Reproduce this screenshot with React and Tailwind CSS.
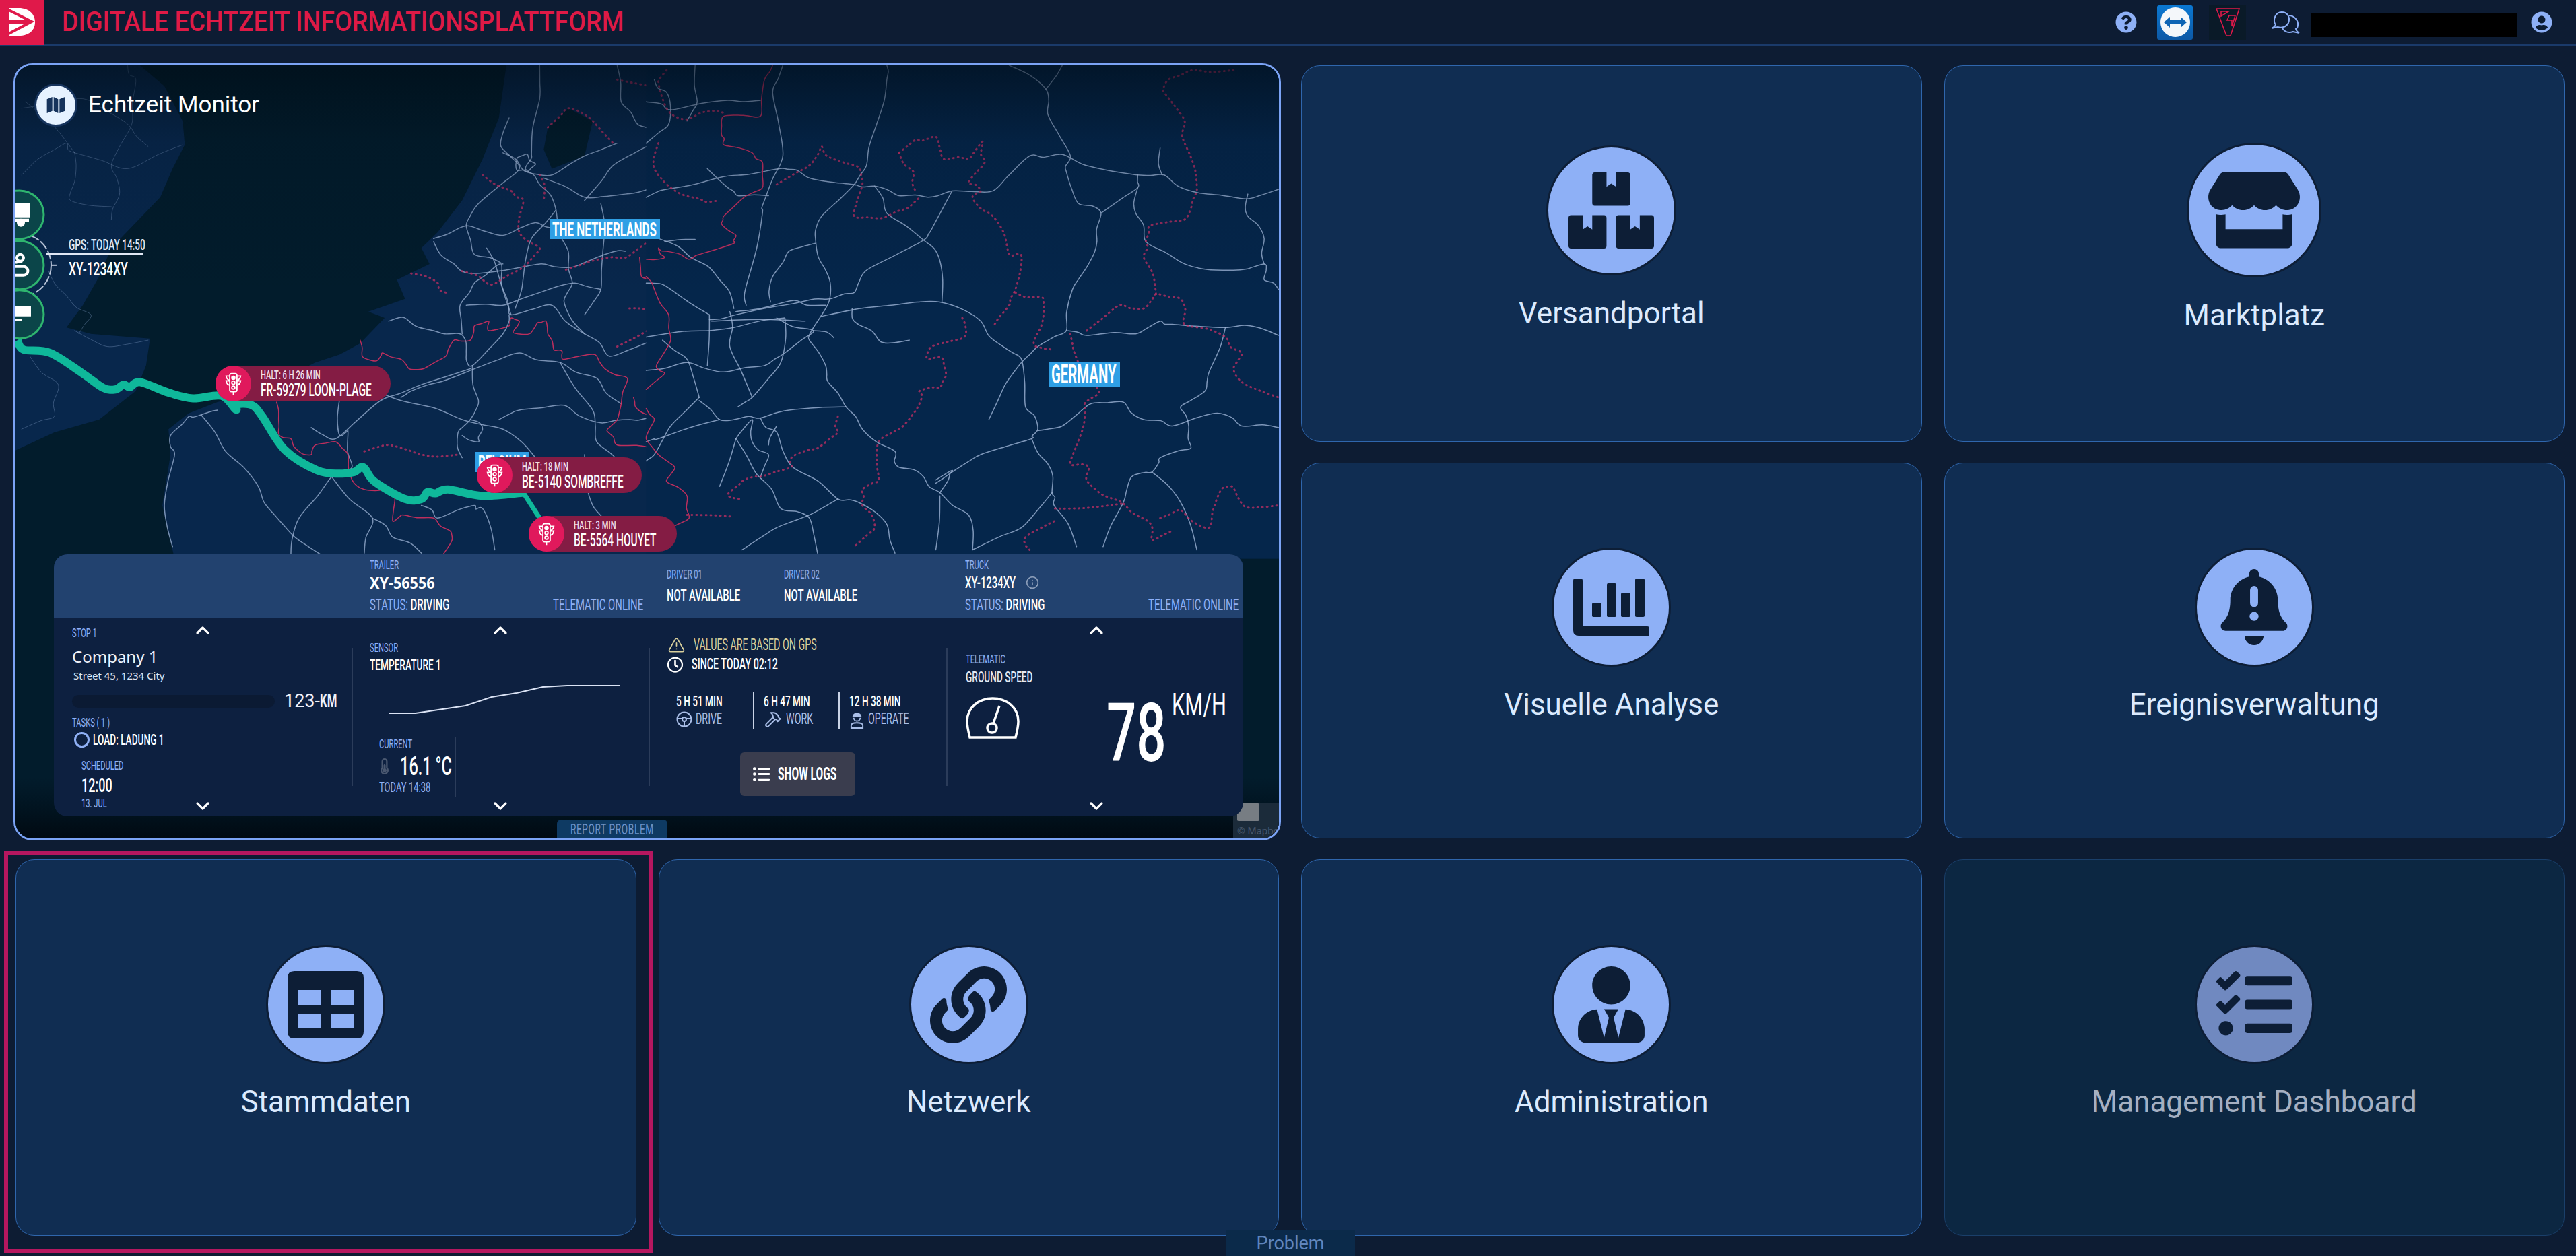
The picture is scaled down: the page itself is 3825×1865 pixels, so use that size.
import React from 'react';
import { FaBoxes, FaStore, FaLink, FaUserTie, FaTasks, FaQuestionCircle, FaUserCircle, FaThermometerHalf, FaRegClock, FaListUl } from 'react-icons/fa';
import { ChevronUp, ChevronDown, Info, TriangleAlert, Hammer } from 'lucide-react';

// traced from the map, left half and right half have their own coordinates
const roadsWest = [
  'M1290 15 L1290 120 L1270 290 L1255 340 L1290 390 L1330 470 L1360 600 L1370 700 L1350 760 L1400 860',
  'M1215 180 L1195 270 L1240 340 L1140 450 L1110 520 L1130 610 L1200 640',
  'M1235 305 L1260 295 L1280 325 L1260 350 L1235 345 L1235 305',
  'M1200 290 L1250 345 L1320 360 L1400 300 L1480 260',
  'M1030 560 L1110 520 L1200 550 L1280 510 L1330 530',
  'M1030 570 L1080 640 L1130 670 L1290 640 L1370 650 L1450 610 L1500 600',
  'M1110 770 L1200 770 L1290 730 L1375 700 L1440 720',
  'M1160 590 L1190 680 L1220 800',
  'M1300 370 L1400 430 L1500 420 L1568 400',
  'M1480 15 L1490 130 L1530 200 L1568 240',
  'M1400 440 L1470 330 L1568 260',
  'M1330 470 L1270 560 L1250 680 L1230 780',
  'M1440 450 L1445 600 L1440 720 L1400 800',
  'M1100 860 L1095 770 L1130 700 L1195 640 L1210 750 L1220 800 L1320 770 L1400 860 L1460 930 L1568 880',
  'M920 820 L960 810 L1030 850 L1095 860 L1110 920 L1125 960 L1200 860 L1215 800',
  'M1125 960 L1140 1070 L1120 1130 L1090 1170 L1100 1250',
  'M1120 1130 L1150 1160 L1140 1200 L1100 1180',
  'M730 1155 L790 1190 L900 1070 L1000 1020 L1120 970',
  'M830 1000 L950 1070 L1100 1130 L1200 1160 L1280 1250',
  'M950 1060 L975 1040 L1050 1010 L1130 970 L1240 920 L1340 950 L1430 1000 L1490 1080',
  'M1190 1130 L1240 1100 L1350 1085 L1440 1140 L1510 1130 L1568 1120',
  'M1340 950 L1420 1100 L1430 1200 L1500 1300',
  'M390 1530 L370 1400 L395 1240 L385 1180 L430 1120 L460 1115 L500 1100',
  'M460 1115 L520 1230 L600 1340 L640 1430 L690 1500 L760 1560',
  'M800 1060 L800 1180 L820 1170 L830 1280 L780 1310 L700 1440 L680 1560',
  'M1000 1400 L1040 1440 L1130 1400 L1150 1410 L1180 1540',
  'M1400 1240 L1420 1400 L1480 1500',
  'M880 1440 L930 1500 L1000 1550',
  'M780 1310 L880 1440 L860 1550',
];
const roadsEngland = [
  'M280 15 L300 60 L290 200 L240 330 L260 420 L240 500',
  'M150 290 L130 260 L60 310 L20 360',
  'M150 290 L280 340 L415 265',
  'M150 290 L150 380 L140 440 L240 460',
  'M30 130 L150 290',
  'M20 150 L170 120 L280 200 L330 270',
  'M85 660 L130 740 L190 800 L160 860',
  'M40 930 L110 1020 L100 1120 L20 1160',
  'M150 850 L230 900 L330 880',
];
const roadsEast = [
  'M590 15 L590 60 L565 200 L540 330 L510 390 L430 490 L415 560 L440 660 L450 750 L410 840 L400 880 L440 960 L445 1010 L490 1090 L530 1160 L610 1230 L620 1280 L680 1310 L720 1360 L790 1430 L800 1540',
  'M890 15 L980 90 L985 170 L1040 300 L1030 350 L1060 450 L1115 480 L1105 570 L1080 650 L1045 720 L1030 850 L960 900 L920 950 L880 1020 L840 1130',
  'M1020 15 L980 90',
  'M0 430 L50 405 L190 365 L325 340 L370 345 L440 380 L510 390 L560 395 L620 425 L690 430 L750 410 L850 410 L940 300 L1020 295 L1130 345 L1205 360 L1270 360 L1350 415 L1470 435 L1550 405',
  'M560 395 L590 480 L680 565 L720 630 L725 760',
  'M750 410 L700 530 L680 565 L540 660 L510 730 L450 750 L360 765 L220 800 L155 815',
  'M430 805 L600 770 L720 760 L820 820 L875 900 L920 940 L930 1090 L960 1160 L945 1190 L820 1240 L750 1295 L710 1330',
  'M1030 850 L1080 865 L1200 860 L1260 820 L1290 830 L1420 840 L1500 840 L1550 865',
  'M960 1165 L1020 1150 L1090 1080 L1170 1075 L1220 1130 L1290 1150 L1400 1110 L1460 1150 L1550 1155',
  'M1420 840 L1380 980 L1370 1040 L1310 1090 L1330 1150 L1335 1220 L1260 1250 L1240 1295 L1190 1310 L1170 1390 L1120 1530',
  'M1240 1295 L1310 1390 L1350 1540',
  'M945 1190 L985 1270 L995 1360 L1000 1400 L1055 1530',
  'M995 1360 L920 1470 L800 1540',
  'M1115 480 L1205 400 L1205 360',
  'M1205 400 L1200 480 L1225 570 L1320 640 L1440 660 L1515 640 L1515 690 L1550 720',
  'M1475 420 L1475 490 L1515 560 L1515 640',
  'M1260 275 L1265 360',
  'M245 770 L245 710 L285 480 L290 440 L335 300 L310 100 L335 15',
  'M305 760 L310 680 L350 600 L415 575',
  'M0 870 L155 850 L215 840 L340 810',
  'M155 800 L150 960',
  'M205 790 L205 900 L260 1060',
  'M160 820 L390 820',
  'M220 790 L360 755 L440 770',
  'M320 810 L410 850 L340 920 L290 960 L190 980 L100 950 L0 975',
  'M410 850 L460 872',
  'M505 780 L520 830 L575 885 L645 880',
  'M130 1070 L180 1130 L250 1120 L280 1125 L350 1100 L490 1090',
  'M280 1125 L320 1170 L360 1280 L470 1380 L520 1390 L590 1460 L610 1550',
  'M180 1130 L30 1190 L0 1200',
  'M130 1060 L60 1150 L20 1240 L0 1260',
  'M220 1190 L180 1340',
  'M220 1190 L260 1130 L260 1200 L300 1240 L280 1310',
  'M300 1210 L320 1150',
  'M220 1190 L270 1300 L330 1410 L400 1440 L420 1550',
  'M470 1380 L400 1430 L320 1470 L235 1540',
  'M225 1090 L260 1060 L330 950 L340 810',
  'M130 1060 L100 940 L40 880',
  'M720 1360 L745 1300 L750 1290 L710 1320',
  'M720 1370 L710 1540',
  'M0 700 L60 720 L155 800',
  'M30 560 L110 620 L180 690 L215 780',
  'M45 570 L120 563',
  'M0 130 L60 155 L200 125 L280 125',
  'M120 15 L125 130 L100 190',
  'M0 260 L55 200 L50 100 L20 60',
  'M150 340 L200 400 L225 425 L300 425',
];
const bordersWest = [
  'M850 880 L855 930 L890 945 L905 920 L950 940 L970 970 L1005 970 L1060 930 L1080 880 L1120 880 L1130 835 L1165 820 L1165 850 L1215 835 L1220 810 L1240 820 L1225 855 L1265 860 L1285 825 L1305 820 L1310 860 L1325 910 L1345 915 L1350 940 L1425 925 L1450 970 L1505 1000 L1490 1080 L1480 1130 L1455 1165 L1480 1210 L1568 1220',
  'M645 1075 L650 1130 L650 1175 L680 1190 L700 1230 L730 1240 L740 1210 L790 1200 L820 1240 L830 1320 L860 1350 L920 1350 L935 1380 L930 1450 L955 1430 L1030 1440 L1070 1480 L1075 1510 L1050 1560',
  'M1520 1060 L1525 1090 L1568 1120',
  'M1535 620 L1540 680 L1568 700',
];
const bordersEast = [
  'M310 15 L290 60 L280 175 L190 175 L185 235 L190 265 L260 290 L285 320 L285 400 L240 430 L190 490 L185 515 L220 550 L215 575 L130 610 L105 625 L50 600 L30 590 L45 620 L0 625',
  'M0 680 L20 720 L55 800 L60 880 L25 960 L45 985 L0 1035',
  'M0 1095 L20 1130 L0 1190 L30 1240 L70 1280 L50 1325 L100 1370 L105 1440 L60 1470',
];
const dotsWest = [
  'M975 670 L1040 700 L1060 730',
  'M1150 360 L1220 410 L1250 440 L1240 540 L1290 590 L1250 650 L1170 705 L1090 660',
  'M1310 210 L1360 150 L1420 190 L1470 260',
  'M1480 60 L1560 80',
  'M1290 360 L1300 440',
  'M1568 560 L1500 620 L1420 630 L1350 660',
  'M860 1230 L920 1210 L1000 1240 L1090 1240',
  'M1480 900 L1568 840',
  'M1510 780 L1560 790',
];
const dotsEast = [
  'M50 30 L30 70 L50 150 L100 185 L150 160 L195 170',
  'M30 260 L20 340 L60 400 L130 435 L180 440',
  'M320 390 L400 330 L430 270 L460 310 L520 335 L530 390 L510 490 L580 495 L640 465 L670 430',
  'M620 290 L660 250 L710 240 L730 310 L790 310 L825 255 L830 320 L790 385 L820 410 L800 430 L850 490 L890 610 L920 615 L905 720 L890 770 L850 840',
  'M905 730 L970 745 L975 790 L950 890 L1000 910',
  'M620 290 L655 350 L660 410',
  'M775 810 L780 870 L700 900 L690 940 L725 935 L735 990 L720 1030 L670 1040 L670 1080 L630 1150 L570 1200 L570 1320 L530 1350 L530 1400 L560 1470 L510 1530',
  'M470 1120 L470 1170 L420 1220 L360 1245 L355 1280 L280 1310 L240 1320 L200 1365 L230 1380',
  'M100 1430 L210 1435',
  'M1040 860 L1050 920 L1110 1040 L1075 1080 L1070 1160 L1040 1270 L1085 1280 L1085 1330 L1165 1390 L1230 1450 L1240 1510 L1290 1480',
  'M1080 850 L1160 770 L1220 780 L1250 735 L1310 750 L1320 830 L1420 870 L1460 920 L1440 970 L1470 1020 L1550 1060',
  'M1250 735 L1220 620 L1225 570 L1235 520 L1320 500 L1340 440 L1350 410 L1345 340 L1320 260 L1320 190 L1270 100 L1280 60 L1340 30 L1440 30',
  'M1165 1395 L1000 1410',
  'M1260 1440 L1310 1415 L1380 1470 L1410 1350 L1440 1345 L1470 1405 L1550 1400',
  'M1000 1450 L930 1500 L940 1540',
];
const route = 'M10 880 L25 910 L90 920 L170 985 L220 1030 L250 1035 L270 1020 L285 1028 L310 1012 L380 1045 L440 1063 L510 1055 L545 1098 L548 1082 L585 1085 L610 1120 L665 1225 L745 1290 L800 1300 L835 1295 L858 1280 L885 1325 L960 1380 L1000 1380 L1015 1358 L1035 1362 L1065 1350 L1150 1370 L1250 1360';

// turn a traced polyline into a slightly wobbly curve so roads don't look ruled
function wobble(d, amount) {
  const nums = d.match(/-?\d+(\.\d+)?/g).map(Number);
  const pts = [];
  for (let i = 0; i < nums.length; i += 2) {
    if (i > 0 && amount > 0) {
      const [px, py] = [nums[i - 2], nums[i - 1]];
      const off = Math.sin(nums[i] * 12.9 + nums[i + 1] * 78.2) * amount;
      pts.push([(px + nums[i]) / 2 + off, (py + nums[i + 1]) / 2 - off]);
    }
    pts.push([nums[i], nums[i + 1]]);
  }
  let out = 'M' + pts[0][0] + ' ' + pts[0][1];
  for (let i = 0; i < pts.length - 1; i++) {
    const a = pts[Math.max(i - 1, 0)];
    const b = pts[i];
    const c = pts[i + 1];
    const e = pts[Math.min(i + 2, pts.length - 1)];
    out += ' C' + (b[0] + (c[0] - a[0]) / 6) + ' ' + (b[1] + (c[1] - a[1]) / 6) + ' ' + (c[0] - (e[0] - b[0]) / 6) + ' ' + (c[1] - (e[1] - b[1]) / 6) + ' ' + c[0] + ' ' + c[1];
  }
  return out;
}

function Lines({ items, stroke, width = 1.4, opacity = 1, dash, amount = 7 }) {
  return items.map((d) => (
    <path key={d} d={wobble(d, amount)} fill="none" stroke={stroke} strokeWidth={width} strokeOpacity={opacity} strokeDasharray={dash} strokeLinecap="round" strokeLinejoin="round" vectorEffect="non-scaling-stroke" />
  ));
}

function MapDrawing() {
  return (
    <svg className="absolute inset-0 w-full h-full" viewBox="0 0 1877 1149" preserveAspectRatio="none">
      <defs>
        <linearGradient id="fade" x1="0" y1="0" x2="0" y2="1">
          <stop offset="0" stopColor="#000b14" stopOpacity=".6" />
          <stop offset=".1" stopColor="#000b14" stopOpacity=".15" />
          <stop offset=".3" stopColor="#000b14" stopOpacity="0" />
          <stop offset=".92" stopColor="#000b14" stopOpacity="0" />
          <stop offset="1" stopColor="#00060c" stopOpacity=".85" />
        </linearGradient>
      </defs>
      <rect width="1877" height="1149" fill="#021c2c" />
      <g transform="translate(-3,-7) scale(.606,.472)">
        <path fill="#08274c" d="M0 0 L310 15 L370 80 L415 190 L420 265 L390 340 L360 430 L300 510 L240 590 L210 680 L170 770 L130 840 L190 860 L335 875 L325 960 L300 1040 L210 1130 L100 1170 L0 1230 Z" />
        <path fill="#08274c" d="M1210 0 L1190 180 L1150 310 L1100 440 L1040 540 L1000 590 L1020 640 L940 690 L960 750 L870 790 L910 810 L850 890 L800 925 L740 950 L600 1040 L500 1075 L430 1110 L380 1160 L385 1240 L365 1400 L395 1568 L1600 1568 L1600 0 Z" />
        <path fill="#021c2c" d="M1310 210 L1360 150 L1420 190 L1400 300 L1320 340 L1300 280 Z" />
        <Lines items={roadsEngland} stroke="#7f9cc4" width={1} opacity={.4} />
        <Lines items={roadsWest} stroke="#9db4d6" width={1.5} opacity={.75} />
        <Lines items={dotsWest} stroke="#c22f63" width={3} opacity={.75} dash="1 6" />
        <Lines items={bordersWest} stroke="#d0305f" width={1.5} opacity={.9} amount={4} />
      </g>
      <g transform="translate(937,-7) scale(.606,.472)">
        <rect width="1568" height="1568" fill="#05264b" />
        <Lines items={roadsEast} stroke="#9db4d6" width={1.5} opacity={.8} />
        <Lines items={dotsEast} stroke="#c22f63" width={3} opacity={.75} dash="1 6" />
        <Lines items={bordersEast} stroke="#d0305f" width={1.5} opacity={.9} amount={4} />
      </g>
      <rect width="1877" height="1149" fill="url(#fade)" />
      <g transform="translate(-3,-7) scale(.606,.472)">
        <path d={wobble(route, 0)} fill="none" stroke="#0fb89a" strokeWidth="12" strokeLinejoin="round" vectorEffect="non-scaling-stroke" />
        <path d="M1250 1360 L1290 1440" fill="none" stroke="#0fb89a" strokeWidth="7" vectorEffect="non-scaling-stroke" />
      </g>
      <circle cx="6" cy="297" r="47" fill="none" stroke="#b9c4d8" strokeWidth="2" strokeDasharray="14 3" />
      <path d="M53 297 h8" stroke="#b9c4d8" strokeWidth="2" />
      <circle cx="6" cy="222" r="36" fill="#0b4549" stroke="#2fb56f" strokeWidth="3" />
      <circle cx="6" cy="297" r="36" fill="#0b4549" stroke="#2fb56f" strokeWidth="3" />
      <circle cx="6" cy="370" r="36" fill="#0b4549" stroke="#2fb56f" strokeWidth="3" />
      <path d="M0 204 h22 v22 h-22z M0 228 h20 v5 h-20z" fill="#fff" />
      <circle cx="8" cy="234" r="6" fill="#fff" />
      <circle cx="7" cy="286" r="5" fill="none" stroke="#fff" strokeWidth="4" />
      <path d="M0 293 L10 291 M0 299 h12 a3 3 0 0 1 0 13 h-12" fill="none" stroke="#fff" strokeWidth="4" />
      <path d="M0 358 h23 v15 h-23z M0 377 h10 v3 h-10z" fill="#fff" />
    </svg>
  );
}

// squeezed caps, the font on the map panel is a narrow one
function Cd({ className = '', right = false, children }) {
  return <div className={(right ? 'origin-right ' : 'origin-left ') + 'scale-x-[.62] whitespace-nowrap ' + className}>{children}</div>;
}

function Label({ children, className = '' }) {
  return <Cd className={'h-5 leading-5 text-[18px] text-[#8fb0f5] ' + className}>{children}</Cd>;
}

function TrafficLight() {
  return (
    <svg viewBox="0 0 30 40" className="w-[27px] h-[38px]" fill="none" stroke="#fff" strokeWidth="2">
      <rect x="9" y="3" width="12" height="30" rx="3" />
      <circle cx="15" cy="10" r="2.6" fill="#fff" />
      <circle cx="15" cy="18" r="2.6" />
      <circle cx="15" cy="26" r="2.6" />
      <path d="M9 7 H3 Q4 13 9 14 M9 15 H3 Q4 21 9 22 M21 7 H27 Q26 13 21 14 M21 15 H27 Q26 21 21 22 M15 33 V38" />
    </svg>
  );
}

function Stop({ className, halt, place }) {
  return (
    <div className={'absolute h-[53px] rounded-full bg-[#841c44] flex items-center ' + className}>
      <div className="w-[53px] h-[53px] rounded-full bg-[#e0195c] flex items-center justify-center shrink-0">
        <TrafficLight />
      </div>
      <div className="ml-[14px] w-0">
        <Cd className="text-[18px] leading-[20px] text-[#f2dfe6] font-medium">{halt}</Cd>
        <Cd className="text-[25px] leading-[26px] text-white font-medium scale-x-[.6]">{place}</Cd>
      </div>
    </div>
  );
}

function Stat({ value, label, icon, className = '' }) {
  return (
    <div className={'h-[56px] pt-[5px] ' + className}>
      <Cd className="h-5 leading-5 text-[22px] text-white font-medium">{value}</Cd>
      <div className="flex items-center gap-[5px] h-[26px] mt-[3px] text-[#aabfe8]">
        {icon}
        <Cd className="text-[23px] w-0">{label}</Cd>
      </div>
    </div>
  );
}

function Wheel() {
  return (
    <svg viewBox="0 0 24 24" className="w-[24px] h-[24px] shrink-0" fill="none" stroke="#aabfe8" strokeWidth="2">
      <circle cx="12" cy="12" r="10.5" />
      <circle cx="12" cy="12" r="3" />
      <path d="M2 11 H9 M15 11 H22 M12 15 V22" />
    </svg>
  );
}

function Worker() {
  return (
    <svg viewBox="0 0 24 28" className="w-[23px] h-[27px] shrink-0" fill="none" stroke="#aabfe8" strokeWidth="2">
      <path d="M6 9 C6 3 18 3 18 9 Z" fill="#aabfe8" />
      <path d="M7 11 C7 18 17 18 17 11" />
      <path d="M3 27 V23 C3 20 8 19 12 19 C16 19 21 20 21 23 V27 Z" />
    </svg>
  );
}

function Panel() {
  return (
    <div className="absolute left-[57px] top-[726px] w-[1766px] h-[389px] rounded-[20px] overflow-hidden bg-[#0d2040] font-['Roboto',sans-serif]">
      <div className="h-[94px] bg-[#22426f] grid grid-cols-4">
        <div />
        <div className="pl-[27px] pr-[26px] pt-[6px]">
          <Label>TRAILER</Label>
          <div className="h-[30px] mt-[1px] leading-[30px] text-[24px] font-bold text-white font-['Noto_Sans',sans-serif] scale-x-[.9] origin-left">XY-56556</div>
          <div className="flex justify-between mt-[6px] h-6 leading-6 text-[24px] text-[#8fb0f5]">
            <Cd className="scale-x-[.57]">STATUS: <span className="text-white font-medium">DRIVING</span></Cd>
            <Cd right className="scale-x-[.57]">TELEMATIC ONLINE</Cd>
          </div>
        </div>
        <div className="pl-[27px] pt-[20px] flex">
          <div className="w-[174px]">
            <Label>DRIVER 01</Label>
            <Cd className="mt-[9px] h-6 leading-6 text-[24px] text-white font-medium">NOT AVAILABLE</Cd>
          </div>
          <div>
            <Label>DRIVER 02</Label>
            <Cd className="mt-[9px] h-6 leading-6 text-[24px] text-white font-medium">NOT AVAILABLE</Cd>
          </div>
        </div>
        <div className="pl-[28px] pr-[27px] pt-[6px]">
          <Label>TRUCK</Label>
          <div className="h-[30px] mt-[1px] flex items-center">
            <Cd className="w-[90px] text-[24px] leading-[30px] font-medium text-white">XY-1234XY</Cd>
            <Info className="w-[20px] h-[20px] text-[#8a9cb8]" />
          </div>
          <div className="flex justify-between mt-[6px] h-6 leading-6 text-[24px] text-[#8fb0f5]">
            <Cd className="scale-x-[.57]">STATUS: <span className="text-white font-medium">DRIVING</span></Cd>
            <Cd right className="scale-x-[.57]">TELEMATIC ONLINE</Cd>
          </div>
        </div>
      </div>
      <div className="h-[295px] grid grid-cols-4 text-white">
        <div className="relative pl-[27px] pt-[13px]">
          <ChevronUp className="absolute left-[205px] top-[3px] w-[32px] h-[32px]" strokeWidth={2.4} />
          <ChevronDown className="absolute left-[205px] top-[264px] w-[32px] h-[32px]" strokeWidth={2.4} />
          <Label>STOP 1</Label>
          <div className="mt-[11px] h-[28px] leading-[28px] text-[24px] font-['Noto_Sans',sans-serif] text-[#eef2fa]">Company 1</div>
          <div className="mt-[4px] h-5 leading-5 text-[15px] pl-[2px] font-['Noto_Sans',sans-serif] text-[#dfe6f3]">Street 45, 1234 City</div>
          <div className="mt-[19px] h-[19px] flex items-center">
            <div className="w-[301px] h-[19px] rounded-full bg-[#0b1a33]" />
            <div className="ml-[14px] text-[27px] flex items-baseline text-[#eef2fa]">123-<Cd className="font-bold w-[38px] scale-x-[.7]">KM</Cd></div>
          </div>
          <Label className="mt-[12px]">TASKS ( 1 )</Label>
          <div className="mt-[3px] h-6 flex items-center pl-[3px]">
            <div className="w-[23px] h-[23px] rounded-full border-[3px] border-[#8fb0f5] shrink-0" />
            <Cd className="ml-[5px] text-[22px] font-medium">LOAD: LADUNG 1</Cd>
          </div>
          <div className="pl-[14px]">
            <Label className="mt-[17px]">SCHEDULED</Label>
            <Cd className="mt-[4px] h-[30px] leading-[30px] text-[29px] font-medium">12:00</Cd>
            <Label className="mt-[2px]">13. JUL</Label>
          </div>
        </div>
        <div className="relative pl-[27px] pt-[35px]">
          <div className="absolute left-0 top-[45px] h-[205px] w-[2px] bg-[#2b3c5a]" />
          <ChevronUp className="absolute left-[205px] top-[3px] w-[32px] h-[32px]" strokeWidth={2.4} />
          <ChevronDown className="absolute left-[205px] top-[264px] w-[32px] h-[32px]" strokeWidth={2.4} />
          <Label>SENSOR</Label>
          <Cd className="mt-[6px] h-5 leading-5 text-[22px] font-medium">TEMPERATURE 1</Cd>
          <svg className="ml-[28px] mt-[19px] w-[343px] h-[43px] block" viewBox="0 0 343 43" fill="none">
            <path d="M0 42 L40 42 L114 31 L153 18 L190 12 L229 3 L265 1 L302 0 L343 0" stroke="#dbe3f5" strokeWidth="2" />
          </svg>
          <div className="mt-[35px] ml-[14px] w-[114px] h-[88px] border-r-2 border-[#2b3c5a]">
            <Label>CURRENT</Label>
            <div className="mt-[3px] h-[40px] flex items-center">
              <FaThermometerHalf className="w-[16px] h-[24px] text-[#4a5870] shrink-0" />
              <Cd className="ml-[15px] w-[70px] text-[38px] leading-[40px] font-medium scale-x-[.55]">16.1 °C</Cd>
            </div>
            <Label className="mt-[1px] text-[21px]">TODAY 14:38</Label>
          </div>
        </div>
        <div className="relative pl-[27px] pt-[29px]">
          <div className="absolute left-0 top-[45px] h-[205px] w-[2px] bg-[#2b3c5a]" />
          <div className="h-6 flex items-center text-[#d8cf9c]">
            <TriangleAlert className="w-[29px] h-[26px] shrink-0" strokeWidth={1.6} />
            <Cd className="ml-[11px] text-[23px]">VALUES ARE BASED ON GPS</Cd>
          </div>
          <div className="mt-[5px] h-6 flex items-center">
            <FaRegClock className="w-[25px] h-[24px] shrink-0" />
            <Cd className="ml-[12px] text-[23px] font-medium">SINCE TODAY 02:12</Cd>
          </div>
          <div className="mt-[28px] ml-[14px] flex">
            <Stat className="w-[114px]" value="5 H 51 MIN" label="DRIVE" icon={<Wheel />} />
            <Stat className="w-[127px] pl-[14px] border-l-2 border-[#c9d3e6]" value="6 H 47 MIN" label="WORK" icon={<Hammer className="w-[28px] h-[26px] shrink-0" strokeWidth={1.8} />} />
            <Stat className="pl-[14px] border-l-2 border-[#c9d3e6]" value="12 H 38 MIN" label="OPERATE" icon={<Worker />} />
          </div>
          <button className="mt-[34px] ml-[109px] w-[171px] h-[65px] rounded-[6px] bg-[#3a3d4e] flex items-center pl-[19px]">
            <FaListUl className="w-[25px] h-[25px] shrink-0" />
            <Cd className="ml-[12px] w-0 text-[25px] font-bold scale-x-[.58]">SHOW LOGS</Cd>
          </button>
        </div>
        <div className="relative pl-[29px] pt-[52px]">
          <div className="absolute left-0 top-[45px] h-[205px] w-[2px] bg-[#2b3c5a]" />
          <ChevronUp className="absolute left-[207px] top-[3px] w-[32px] h-[32px]" strokeWidth={2.4} />
          <ChevronDown className="absolute left-[207px] top-[264px] w-[32px] h-[32px]" strokeWidth={2.4} />
          <Label>TELEMATIC</Label>
          <Cd className="mt-[7px] h-5 leading-5 text-[22px] font-medium text-[#e5e9f2]">GROUND SPEED</Cd>
          <div className="mt-[19px] flex items-start">
            <svg viewBox="0 0 80 63" className="w-[80px] h-[63px] shrink-0" fill="none" stroke="#fff" strokeWidth="3.5">
              <path d="M6 60 H74 Q78 44 78 36 C78 15 60 2 40 2 C20 2 2 15 2 36 Q2 44 6 60 Z" />
              <circle cx="39" cy="46" r="7" />
              <path d="M41 39 L50 13" />
            </svg>
            <Cd className="ml-[129px] -mt-[6px] w-[87px] text-[120px] leading-[120px] font-medium scale-x-[.65]">78</Cd>
            <Cd className="ml-[10px] -mt-[12px] w-[81px] text-[46px] leading-[46px] scale-x-[.67]">KM/H</Cd>
          </div>
        </div>
      </div>
    </div>
  );
}

function CountryTag({ className, children, textClass }) {
  return (
    <div className={'absolute bg-[#2f9fe5] flex items-center pl-[4px] ' + className}>
      <Cd className={'w-0 text-white font-bold ' + textClass}>{children}</Cd>
    </div>
  );
}

function MapCard() {
  return (
    <div className="col-span-2 row-span-2 -m-[3px] relative rounded-[28px] border-[3px] border-[#7ba3f5] overflow-hidden font-['Roboto',sans-serif]">
      <MapDrawing />
      <CountryTag className="left-[793px] top-[228px] w-[164px] h-[30px]" textClass="text-[30px] scale-x-[.565]">THE NETHERLANDS</CountryTag>
      <CountryTag className="left-[1534px] top-[441px] w-[106px] h-[37px]" textClass="text-[38px] scale-x-[.535]">GERMANY</CountryTag>
      <CountryTag className="left-[683px] top-[574px] w-[79px] h-[30px]" textClass="text-[30px] scale-x-[.565]">BELGIUM</CountryTag>

      <div className="absolute left-[28px] top-[27px] flex items-center">
        <div className="w-[64px] h-[64px] rounded-full bg-[#e6f2ff] border-[3px] border-[#16335c] flex items-center justify-center">
          <svg viewBox="0 0 24 24" className="w-[32px] h-[32px]" fill="#16335c">
            <path d="M2 5.5 L8 3 V18.5 L2 21 Z M9.5 3 L14.5 5.5 V21 L9.5 18.5 Z M16 5.5 L22 3 V18.5 L16 21 Z" />
          </svg>
        </div>
        <div className="ml-[16px] text-[35px] leading-[40px] text-white whitespace-nowrap">Echtzeit Monitor</div>
      </div>

      <div className="absolute left-[45px] top-[255px]">
        <Cd className="ml-[34px] text-[22px] leading-[24px] text-[#dfe6f3] font-medium w-[110px] scale-x-[.6]">GPS: TODAY 14:50</Cd>
        <div className="w-[144px] h-[2px] bg-[#dfe6f3]" />
        <Cd className="ml-[34px] mt-[7px] text-[28px] leading-[30px] text-white font-medium scale-x-[.7]">XY-1234XY</Cd>
      </div>

      <Stop className="left-[297px] top-[446px] w-[260px]" halt="HALT: 6 H 26 MIN" place="FR-59279 LOON-PLAGE" />
      <Stop className="left-[685px] top-[582px] w-[245px]" halt="HALT: 18 MIN" place="BE-5140 SOMBREFFE" />
      <Stop className="left-[762px] top-[669px] w-[220px]" halt="HALT: 3 MIN" place="BE-5564 HOUYET" />

      <div className="absolute left-[804px] top-[1120px] w-[164px] h-[29px] rounded-t-[6px] bg-[#0e3a63] flex items-center justify-center text-[#6f93c9]">
        <div className="text-[22px] tracking-[1px] scale-x-[.62] whitespace-nowrap">REPORT PROBLEM</div>
      </div>
      <div className="absolute right-0 bottom-0 w-[68px] h-[52px] bg-[#1b2b3a] pl-[6px] overflow-hidden">
        <div className="w-[33px] h-[26px] bg-[#777d83] rounded-[2px]" />
        <div className="text-[15px] text-[#46566a] mt-[4px] whitespace-nowrap">© Mapbox</div>
      </div>
      <Panel />
    </div>
  );
}

function ChartIcon() {
  return (
    <svg viewBox="0 0 113 85" className="w-[113px] h-[85px]" fill="#0d1e36">
      <path d="M3 0 H11 Q14 0 14 3 V71 H110 Q113 71 113 74 V85 H8 Q0 85 0 77 V3 Q0 0 3 0 Z" />
      <rect x="28" y="36" width="14" height="21" rx="2" />
      <rect x="50" y="7" width="14" height="50" rx="2" />
      <rect x="71" y="21" width="14" height="36" rx="2" />
      <rect x="92" y="0" width="14" height="57" rx="2" />
    </svg>
  );
}

function BellIcon() {
  return (
    <svg viewBox="0 0 448 512" className="w-[100px] h-[113px]">
      <path fill="#0d1e36" d="M224 0 c-18 0 -32 14 -32 32 v19 C119 66 64 131 64 208 c0 102 -36 133 -56 155 c-6 6 -8 14 -8 21 c0 17 13 32 32 32 h384 c19 0 32 -15 32 -32 c0 -7 -3 -15 -8 -21 c-20 -22 -56 -53 -56 -155 c0 -77 -55 -142 -128 -157 V32 c0 -18 -14 -32 -32 -32z M224 512 c35 0 64 -29 64 -64 H160 c0 35 29 64 64 64z" />
      <rect x="197" y="113" width="54" height="143" rx="27" fill="#8eb0f6" />
      <circle cx="224" cy="318" r="30" fill="#8eb0f6" />
    </svg>
  );
}

function TableIcon() {
  return (
    <svg viewBox="0 0 113 100" className="w-[113px] h-[100px]">
      <path fillRule="evenodd" fill="#0d1e36" d="M10 0 H103 Q113 0 113 10 V90 Q113 100 103 100 H10 Q0 100 0 90 V10 Q0 0 10 0 Z M15 28 V50 H49 V28 Z M64 28 V50 H98 V28 Z M15 63 V85 H49 V63 Z M64 63 V85 H98 V63 Z" />
    </svg>
  );
}

const dark = 'text-[#0d1e36]';

function Tile({ label, icon, size = 'w-[177px] h-[177px]', dim = false, children }) {
  return (
    <div className={'relative rounded-[28px] border flex flex-col items-center justify-center pb-[47px] ' + (dim ? 'bg-[#0c2742] border-[#1a3f6a]' : 'bg-[#102d52] border-[#2f66ad]')}>
      {children}
      <div className={'rounded-full border-[3px] border-[#0d1e36] flex items-center justify-center ' + size + (dim ? ' bg-[#7089c0]' : ' bg-[#8eb0f6]')}>
        {icon}
      </div>
      <div className={'mt-[31px] h-[50px] leading-[50px] text-[44px] whitespace-nowrap ' + (dim ? 'text-[#a5b0c2]' : 'text-[#dbeafe]')}>{label}</div>
    </div>
  );
}

function TopBar() {
  return (
    <header className="h-[68px] border-b-2 border-[#1a3a6a] flex items-center shrink-0">
      <div className="w-[66px] h-[68px] bg-[#e0194a] flex items-center justify-center shrink-0">
        <svg viewBox="0 0 66 68" className="w-[66px] h-[68px]">
          <path fill="#fff" d="M13 13 H28 C43 13 52 22 52 34 C52 46 43 54 28 54 H13 Z" />
          <path d="M11 15 L47 33 L11 52" fill="none" stroke="#e0194a" strokeWidth="4" />
          <path d="M11 33 H46" fill="none" stroke="#e0194a" strokeWidth="6" />
          <path fill="#e0194a" d="M54 38 L42 56 H54 Z" />
        </svg>
      </div>
      <div className="ml-[26px] text-[40px] font-medium text-[#de1a46] whitespace-nowrap origin-left scale-x-[.937]">DIGITALE ECHTZEIT INFORMATIONSPLATTFORM</div>
      <div className="ml-auto flex items-center pr-[35px]">
        <FaQuestionCircle className="w-[32px] h-[32px] text-[#8eb0f6]" />
        <div className="ml-[30px] w-[53px] h-[51px] rounded-[3px] bg-gradient-to-b from-[#0a78d2] to-[#0d59a6] flex items-center justify-center">
          <svg viewBox="0 0 44 44" className="w-[44px] h-[44px]">
            <circle cx="22" cy="22" r="22" fill="#f4f7fa" />
            <path fill="#0e64b4" d="M5 22 L14 14 V19 H30 V14 L39 22 L30 30 V25 H14 V30 Z" />
          </svg>
        </div>
        <div className="ml-[24px] w-[55px] h-[53px] bg-[#0a1a28] flex items-center justify-center">
          <svg viewBox="0 0 36 44" className="w-[36px] h-[44px]" fill="none" stroke="#e0194a" strokeWidth="1.6">
            <path d="M1 2 H35 L22 42 H16 Z" />
            <path d="M8 6 H19 L8 13 Z M20 12 H29 L24 28 V19 H17 Z" />
          </svg>
        </div>
        <svg viewBox="0 0 45 33" className="ml-[36px] w-[45px] h-[33px]" fill="none" stroke="#8eb0f6" strokeWidth="2">
          <path d="M8 20 C3 12 8 1 17 1 C26 1 30 9 27 17 C24 23 17 25 11 23 L2 25 C5 24 7 22 8 20 Z" />
          <path d="M28 6 C35 6 42 13 41 20 C41 23 40 25 38 26 C39 29 41 31 43 32 L34 30 C28 32 22 31 18 25" />
        </svg>
        <div className="ml-[16px] w-[305px] h-[36px] bg-black mt-[8px]" />
        <FaUserCircle className="ml-[21px] w-[32px] h-[32px] text-[#8eb0f6]" />
      </div>
    </header>
  );
}

export default function App() {
  return (
    <div className="relative w-[3825px] h-[1865px] overflow-hidden bg-[#0d1c33] flex flex-col font-['Roboto',sans-serif]">
      <TopBar />
      <main className="flex-1 pl-[23px] pr-[17px] pt-[29px] pb-[30px] grid grid-cols-4 grid-rows-3 gap-x-[33px] gap-y-[31px]">
        <MapCard />
        <Tile label="Versandportal" size="w-[193px] h-[193px]" icon={<FaBoxes size={127} className={dark} />} />
        <Tile label="Marktplatz" size="w-[200px] h-[200px]" icon={<FaStore size={136} className={dark} />} />
        <Tile label="Visuelle Analyse" icon={<ChartIcon />} />
        <Tile label="Ereignisverwaltung" icon={<BellIcon />} />
        <Tile label="Stammdaten" icon={<TableIcon />}>
          <div className="absolute -left-[18px] -top-[13px] w-[964px] h-[597px] border-[6px] border-[#b5175f] pointer-events-none" />
        </Tile>
        <Tile label="Netzwerk" icon={<FaLink size={114} className={dark} />} />
        <Tile label="Administration" icon={<FaUserTie size={113} className={dark} />} />
        <Tile label="Management Dashboard" dim icon={<FaTasks size={113} className={dark} />} />
      </main>
      <div className="absolute left-[1820px] bottom-0 w-[192px] h-[38px] bg-[#0b2a4a] flex items-center justify-center text-[27px] text-[#5f85bd]">Problem</div>
    </div>
  );
}
